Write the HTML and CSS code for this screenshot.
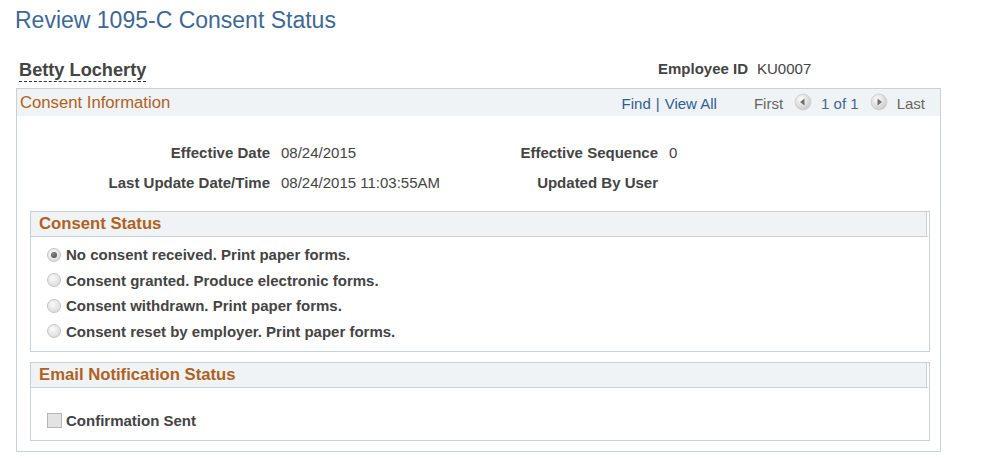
FILE: index.html
```html
<!DOCTYPE html>
<html lang="en">
<head>
    <meta charset="UTF-8">
    <title>Review 1095-C Consent Status</title>
    <link rel="stylesheet" href="styles.css">
</head>
<body>

    <h1 class="page-title">Review 1095-C Consent Status</h1>

    <!-- Employee header -->
    <div class="emp-row">
        <div class="emp-name"><span>Betty Locherty</span></div>
        <div class="emp-id">
            <span class="label">Employee ID</span>
            <span class="value">KU0007</span>
        </div>
    </div>

    <!-- Consent Information scroll area -->
    <div class="scroll-box">
        <div class="scroll-header">
            <span class="scroll-title">Consent Information</span>
            <div class="scroll-nav">
                <a class="link">Find</a>
                <span class="sep">|</span>
                <a class="link">View All</a>
                <span class="nav-text first">First</span>
                <span class="nav-btn">
                    <svg width="18" height="18" viewBox="0 0 18 18">
                        <defs>
                            <radialGradient id="g1" cx="40%" cy="35%" r="65%">
                                <stop offset="0" stop-color="#ffffff"/>
                                <stop offset="1" stop-color="#c9c9c9"/>
                            </radialGradient>
                        </defs>
                        <circle cx="9" cy="9" r="8" fill="url(#g1)" stroke="#d4d4d4"/>
                        <path d="M6 9 L10.5 5.5 L10.5 12.5 Z" fill="#6f6f6f"/>
                    </svg>
                </span>
                <span class="count">1 of 1</span>
                <span class="nav-btn">
                    <svg width="18" height="18" viewBox="0 0 18 18">
                        <circle cx="9" cy="9" r="8" fill="url(#g1)" stroke="#d4d4d4"/>
                        <path d="M12 9 L7.5 5.5 L7.5 12.5 Z" fill="#6f6f6f"/>
                    </svg>
                </span>
                <span class="nav-text">Last</span>
            </div>
        </div>

        <div class="scroll-body">
            <div class="field-grid">
                <span class="label">Effective Date</span>
                <span class="value">08/24/2015</span>
                <span class="label">Effective Sequence</span>
                <span class="value">0</span>

                <span class="label">Last Update Date/Time</span>
                <span class="value">08/24/2015 11:03:55AM</span>
                <span class="label">Updated By User</span>
                <span class="value"></span>
            </div>

            <div class="group-box">
                <div class="group-header">Consent Status</div>
                <div class="group-body radios">
                    <div class="radio-row"><span class="radio checked"></span>No consent received. Print paper forms.</div>
                    <div class="radio-row"><span class="radio"></span>Consent granted. Produce electronic forms.</div>
                    <div class="radio-row"><span class="radio"></span>Consent withdrawn. Print paper forms.</div>
                    <div class="radio-row"><span class="radio"></span>Consent reset by employer. Print paper forms.</div>
                </div>
            </div>

            <div class="group-box">
                <div class="group-header">Email Notification Status</div>
                <div class="group-body checks">
                    <div class="check-row"><span class="checkbox"></span>Confirmation Sent</div>
                </div>
            </div>
        </div>
    </div>

</body>
</html>
```

FILE: styles.css
```css
body {
    margin: 0;
    font-family: "Liberation Sans", Arial, sans-serif;
    color: #333;
    background: #fff;
}
.page-title {
    margin: 0;
    padding: 6px 0 0 15px;
    font-size: 23px;
    font-weight: normal;
    line-height: 28px;
    color: #3e6894;
}
.emp-row {
    display: flex;
    align-items: flex-end;
    margin: 21px 0 0 16px;
    width: 925px;
    height: 26px;
}
.emp-name {
    width: 639px;
    padding-left: 3px;
}
.emp-name span {
    font-size: 18.2px;
    font-weight: bold;
    color: #444;
    border-bottom: 1px dashed #333;
    padding-bottom: 1px;
}
.emp-id {
    display: flex;
    gap: 9px;
    font-size: 15px;
    padding-bottom: 4px;
}
.label {
    font-weight: bold;
    color: #444;
}
.value {
    color: #444;
}

.scroll-box {
    margin: 7px 0 0 16px;
    width: 923px;
    border: 1px solid #cbd0d5;
}
.scroll-header {
    display: flex;
    justify-content: space-between;
    align-items: center;
    height: 27px;
    background: #eff3f5;
    padding: 0 15px 0 3px;
}
.scroll-title {
    font-size: 16.7px;
    color: #b0611f;
}
.scroll-nav {
    display: flex;
    align-items: center;
    font-size: 15px;
    padding-top: 2px;
}
.link {
    color: #2c5f93;
}
.sep {
    color: #2c5f93;
    margin: 0 5px;
}
.nav-text {
    color: #666;
}
.nav-text.first {
    margin-left: 37px;
}
.nav-btn {
    display: flex;
    margin: -3px 9px 0 11px;
}
.count {
    color: #3e6894;
}

.scroll-body {
    padding: 21px 10px 10px 13px;
}
.field-grid {
    display: grid;
    grid-template-columns: 240px 187px 201px 1fr;
    grid-auto-rows: 30px;
    align-items: center;
    font-size: 15px;
}
.field-grid .label {
    text-align: right;
}
.field-grid .value {
    padding-left: 11px;
}

.group-box {
    margin-top: 14px;
    border: 1px solid #cbd0d5;
}
.group-box + .group-box {
    margin-top: 10px;
}
.group-header {
    height: 24px;
    line-height: 23px;
    background: #eff3f5;
    border-bottom: 1px solid #cbd0d5;
    border-right: 2px solid #fff;
    box-shadow: inset -1px 0 0 #cbd0d5;
    padding-left: 8px;
    font-size: 16.7px;
    font-weight: bold;
    color: #b0611f;
}
.group-body {
    font-weight: bold;
    font-size: 15px;
    color: #444;
}
.radios {
    padding: 5px 0 7px 16px;
}
.radio-row,
.check-row {
    display: flex;
    align-items: center;
    height: 25px;
}
.radios .radio-row {
    height: 25.5px;
}
.radio {
    width: 14px;
    height: 14px;
    margin-right: 5px;
    border-radius: 50%;
    border: 1px solid #c4c4c4;
    background: radial-gradient(circle at 40% 35%, #fafafa, #d3d3d3);
    box-sizing: border-box;
    position: relative;
}
.radio.checked::after {
    content: "";
    position: absolute;
    left: 3px;
    top: 3px;
    width: 6px;
    height: 6px;
    border-radius: 50%;
    background: radial-gradient(circle at 40% 35%, #888, #444);
}
.checks {
    padding: 20px 0 7px 16px;
}
.checkbox {
    width: 15px;
    height: 15px;
    margin-right: 4px;
    border: 1px solid #b5b5b5;
    background: #e3e3e3;
    box-sizing: border-box;
}
```
